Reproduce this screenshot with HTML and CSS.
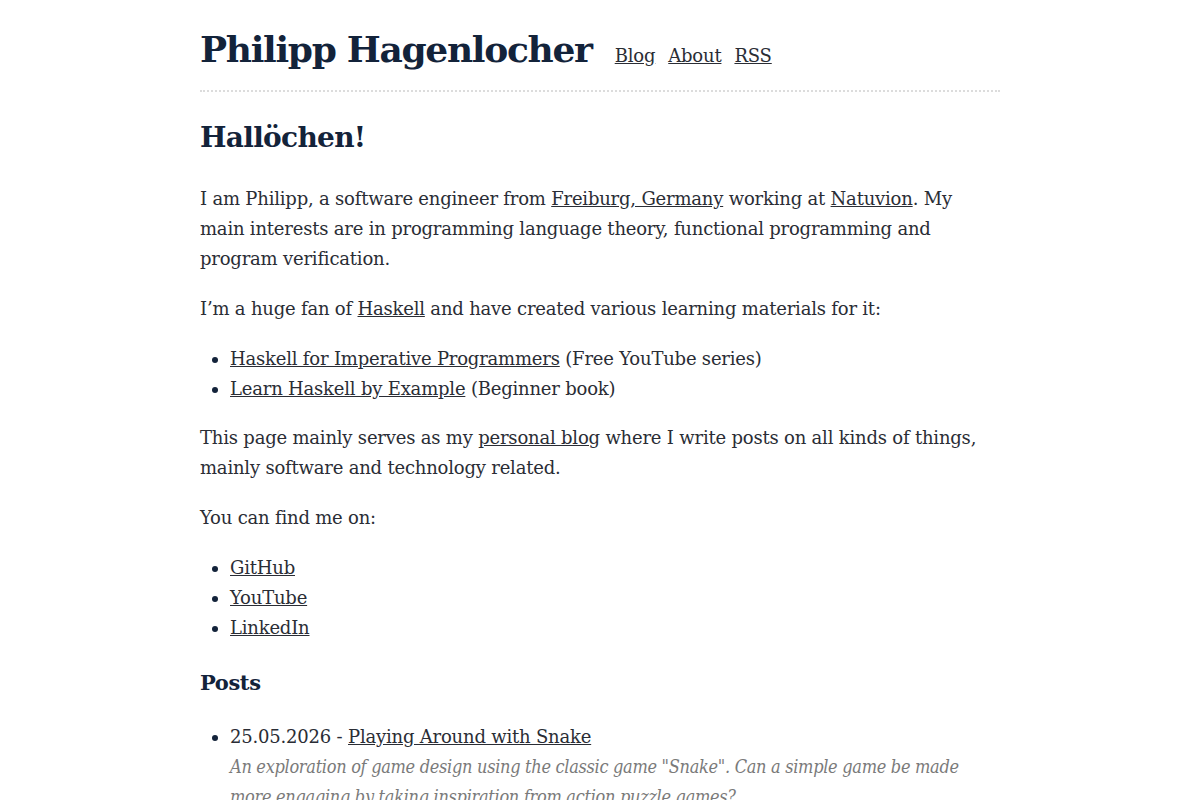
FILE: index.html
```html
<!DOCTYPE html>
<html lang="en">
<head>
  <meta charset="UTF-8">
  <title>Philipp Hagenlocher</title>
  <link rel="stylesheet" href="styles.css">
</head>
<body>
  <header class="site-header">
    <a class="site-title" href="#">Philipp Hagenlocher</a>
    <nav class="site-nav">
      <a href="#">Blog</a>
      <a href="#">About</a>
      <a href="#">RSS</a>
    </nav>
  </header>

  <main class="content">
    <h2>Hallöchen!</h2>
    <p>I am Philipp, a software engineer from <a href="#">Freiburg, Germany</a> working at <a href="#">Natuvion</a>. My main interests are in programming language theory, functional programming and program verification.</p>
    <p>I’m a huge fan of <a href="#">Haskell</a> and have created various learning materials for it:</p>
    <ul>
      <li><a href="#">Haskell for Imperative Programmers</a> (Free YouTube series)</li>
      <li><a href="#">Learn Haskell by Example</a> (Beginner book)</li>
    </ul>
    <p>This page mainly serves as my <a href="#">personal blog</a> where I write posts on all kinds of things, mainly software and technology related.</p>
    <p>You can find me on:</p>
    <ul>
      <li><a href="#">GitHub</a></li>
      <li><a href="#">YouTube</a></li>
      <li><a href="#">LinkedIn</a></li>
    </ul>

    <h3>Posts</h3>
    <ul class="posts">
      <li>
        25.05.2026 - <a href="#">Playing Around with Snake</a>
        <div class="summary">An exploration of game design using the classic game "Snake". Can a simple game be made more engaging by taking inspiration from action puzzle games?</div>
      </li>
    </ul>
  </main>
</body>
</html>
```

FILE: styles.css
```css
body {
  margin: 0;
  background: #fff;
  color: #2a2d35;
  font-family: "DejaVu Serif", "Liberation Serif", serif;
  font-size: 18px;
  line-height: 30px;
  letter-spacing: -0.2px;
}
a {
  color: inherit;
}
.site-header {
  width: 800px;
  margin: 0 auto;
  padding-top: 22px;
  padding-bottom: 14px;
  display: flex;
  align-items: baseline;
  gap: 23px;
  border-bottom: 2px dotted #dcdcdc;
}
.site-title {
  font-size: 36px;
  line-height: 54px;
  font-weight: bold;
  letter-spacing: -1.3px;
  color: #13233a;
  text-decoration: none;
}
.site-nav {
  display: flex;
  gap: 13px;
  font-size: 18px;
}
.content {
  width: 800px;
  margin: 0 auto;
}
h2, h3 {
  color: #13233a;
  font-weight: bold;
}
h2 {
  font-size: 28px;
  line-height: 40px;
  letter-spacing: -0.7px;
  margin: 26px 0 26px;
}
h3 {
  font-size: 21px;
  line-height: 30px;
  letter-spacing: -0.4px;
  margin: 25px 0 24px;
}
p {
  margin: 0 0 20px;
}
ul {
  margin: 0 0 19px;
  padding-left: 30px;
}
li::marker {
  color: #13233a;
}
.summary {
  font-family: "DejaVu Serif Condensed", "DejaVu Serif", serif;
  font-stretch: condensed;
  font-style: italic;
  letter-spacing: -0.3px;
  color: #7a7a7a;
}
```
